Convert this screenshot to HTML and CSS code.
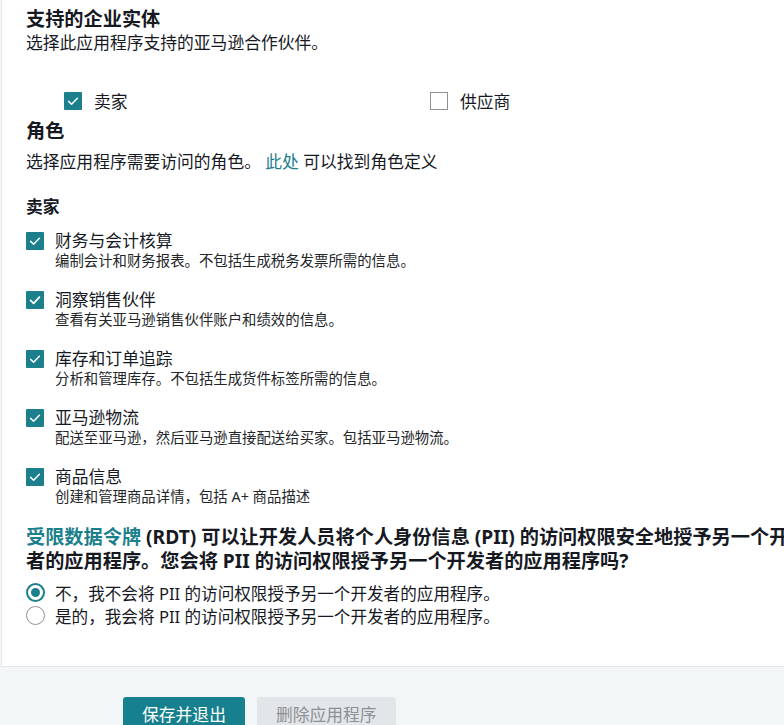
FILE: index.html
```html
<!DOCTYPE html>
<html lang="zh-CN">
<head>
<meta charset="utf-8">
<title>应用程序设置</title>
<link rel="stylesheet" href="styles.css">
</head>
<body>
<div class="page">
  <section class="card">
    <h2 class="title">支持的企业实体</h2>
    <p class="sub">选择此应用程序支持的亚马逊合作伙伴。</p>
    <div class="entities">
      <label class="entity">
        <span class="cb cb-on"><svg viewBox="0 0 18 18" width="18" height="18"><polyline points="4.6,9.4 7.6,12.3 13.4,6.2" fill="none" stroke="#fff" stroke-width="1.5" stroke-linecap="round" stroke-linejoin="round"/></svg></span>
        <span class="entity-label">卖家</span>
      </label>
      <label class="entity">
        <span class="cb cb-off"></span>
        <span class="entity-label">供应商</span>
      </label>
    </div>
    <h2 class="title roles-title">角色</h2>
    <p class="roles-desc">选择应用程序需要访问的角色。 <a class="link" href="#">此处</a> 可以找到角色定义</p>
    <h3 class="group">卖家</h3>
    <ul class="role-list">
      <li class="role">
        <span class="cb cb-on"><svg viewBox="0 0 18 18" width="18" height="18"><polyline points="4.6,9.4 7.6,12.3 13.4,6.2" fill="none" stroke="#fff" stroke-width="1.5" stroke-linecap="round" stroke-linejoin="round"/></svg></span>
        <div class="role-text">
          <div class="role-name">财务与会计核算</div>
          <div class="role-desc">编制会计和财务报表。不包括生成税务发票所需的信息。</div>
        </div>
      </li>
      <li class="role">
        <span class="cb cb-on"><svg viewBox="0 0 18 18" width="18" height="18"><polyline points="4.6,9.4 7.6,12.3 13.4,6.2" fill="none" stroke="#fff" stroke-width="1.8" stroke-linecap="round" stroke-linejoin="round"/></svg></span>
        <div class="role-text">
          <div class="role-name">洞察销售伙伴</div>
          <div class="role-desc">查看有关亚马逊销售伙伴账户和绩效的信息。</div>
        </div>
      </li>
      <li class="role">
        <span class="cb cb-on"><svg viewBox="0 0 18 18" width="18" height="18"><polyline points="4.6,9.4 7.6,12.3 13.4,6.2" fill="none" stroke="#fff" stroke-width="1.5" stroke-linecap="round" stroke-linejoin="round"/></svg></span>
        <div class="role-text">
          <div class="role-name">库存和订单追踪</div>
          <div class="role-desc">分析和管理库存。不包括生成货件标签所需的信息。</div>
        </div>
      </li>
      <li class="role">
        <span class="cb cb-on"><svg viewBox="0 0 18 18" width="18" height="18"><polyline points="4.6,9.4 7.6,12.3 13.4,6.2" fill="none" stroke="#fff" stroke-width="1.5" stroke-linecap="round" stroke-linejoin="round"/></svg></span>
        <div class="role-text">
          <div class="role-name">亚马逊物流</div>
          <div class="role-desc">配送至亚马逊，然后亚马逊直接配送给买家。包括亚马逊物流。</div>
        </div>
      </li>
      <li class="role">
        <span class="cb cb-on"><svg viewBox="0 0 18 18" width="18" height="18"><polyline points="4.6,9.4 7.6,12.3 13.4,6.2" fill="none" stroke="#fff" stroke-width="1.5" stroke-linecap="round" stroke-linejoin="round"/></svg></span>
        <div class="role-text">
          <div class="role-name">商品信息</div>
          <div class="role-desc">创建和管理商品详情，包括 A+ 商品描述</div>
        </div>
      </li>
    </ul>
    <p class="rdt"><a class="link" href="#">受限数据令牌</a> (RDT) 可以让开发人员将个人身份信息 (PII) 的访问权限安全地授予另一个开发者的应用程序。您会将 PII 的访问权限授予另一个开发者的应用程序吗?</p>
    <div class="radios">
      <label class="radio-row"><span class="radio radio-on"></span><span>不，我不会将 PII 的访问权限授予另一个开发者的应用程序。</span></label>
      <label class="radio-row"><span class="radio"></span><span>是的，我会将 PII 的访问权限授予另一个开发者的应用程序。</span></label>
    </div>
  </section>
  <div class="actions">
    <button class="btn btn-primary" type="button">保存并退出</button>
    <button class="btn btn-disabled" type="button">删除应用程序</button>
  </div>
</div>
</body>
</html>
```

FILE: styles.css
```css
html, body {
  margin: 0;
  padding: 0;
  overflow: hidden;
  background: #f3f6f7;
}
body {
  font-family: "Noto Sans", "Noto Sans CJK SC", sans-serif;
  color: #16191f;
}
.page {
  width: 1000px;
}
.card {
  margin-left: 1px;
  background: #ffffff;
  border-left: 1px solid #e3e7e9;
  border-bottom: 1px solid #e3e7e9;
  padding: 7px 0 39px 24px;
}
.title {
  margin: 0;
  font-size: 19.2px;
  line-height: 24px;
  font-weight: 700;
}
.sub {
  margin: 0;
  font-size: 16.8px;
  line-height: 24px;
}
.entities {
  margin-top: 34px;
  padding-left: 38px;
  display: grid;
  grid-template-columns: 366px 366px;
}
.entity {
  display: flex;
  align-items: center;
  height: 24px;
  gap: 12px;
  font-size: 16.8px;
}
.cb {
  flex: none;
  width: 18px;
  height: 18px;
  box-sizing: border-box;
  display: block;
}
.cb svg { display: block; }
.cb-on {
  background: #1b7f8c;
  border-radius: 1px;
}
.cb-off {
  background: #fff;
  border: 1px solid #8e9295;
}
.roles-title {
  margin-top: 6px;
}
.roles-desc {
  margin: 7px 0 0;
  font-size: 16.8px;
  line-height: 24px;
}
.link {
  color: #1b7f8c;
  text-decoration: none;
}
.group {
  margin: 23px 0 0;
  font-size: 16.8px;
  line-height: 20px;
  font-weight: 700;
}
.role-list {
  list-style: none;
  margin: 13px 0 0;
  padding: 0;
  display: flex;
  flex-direction: column;
  gap: 18px;
}
.role {
  display: flex;
  align-items: flex-start;
  gap: 11px;
}
.role .cb {
  margin-top: 2px;
}
.role-name {
  font-size: 16.8px;
  line-height: 21px;
}
.role-desc {
  font-size: 14.4px;
  line-height: 20px;
  color: #232629;
}
.rdt {
  margin: 18px 0 0;
  width: 787px;
  font-size: 19.2px;
  line-height: 24px;
  font-weight: 700;
}
.radios {
  margin-top: 8px;
  display: flex;
  flex-direction: column;
}
.radio-row {
  display: flex;
  align-items: center;
  height: 23px;
  gap: 10px;
  font-size: 16.6px;
}
.radio {
  flex: none;
  width: 19px;
  height: 19px;
  box-sizing: border-box;
  border-radius: 50%;
  border: 1px solid #8e9295;
  background: #fff;
  position: relative;
}
.radio-on {
  border: 2px solid #1b7f8c;
}
.radio-on::after {
  content: "";
  position: absolute;
  left: 50%;
  top: 50%;
  width: 9px;
  height: 9px;
  margin: -4.5px 0 0 -4.5px;
  border-radius: 50%;
  background: #1b7f8c;
}
.actions {
  padding: 30px 0 0 123px;
  display: flex;
  gap: 12px;
}
.btn {
  font-family: "Noto Sans", "Noto Sans CJK SC", sans-serif;
  font-size: 16.8px;
  line-height: 20px;
  padding: 8px 19px;
  border: none;
  border-radius: 3px;
}
.btn-primary {
  background: #17808e;
  color: #ffffff;
}
.btn-disabled {
  background: #e3e6e8;
  color: #8b9196;
}
```
